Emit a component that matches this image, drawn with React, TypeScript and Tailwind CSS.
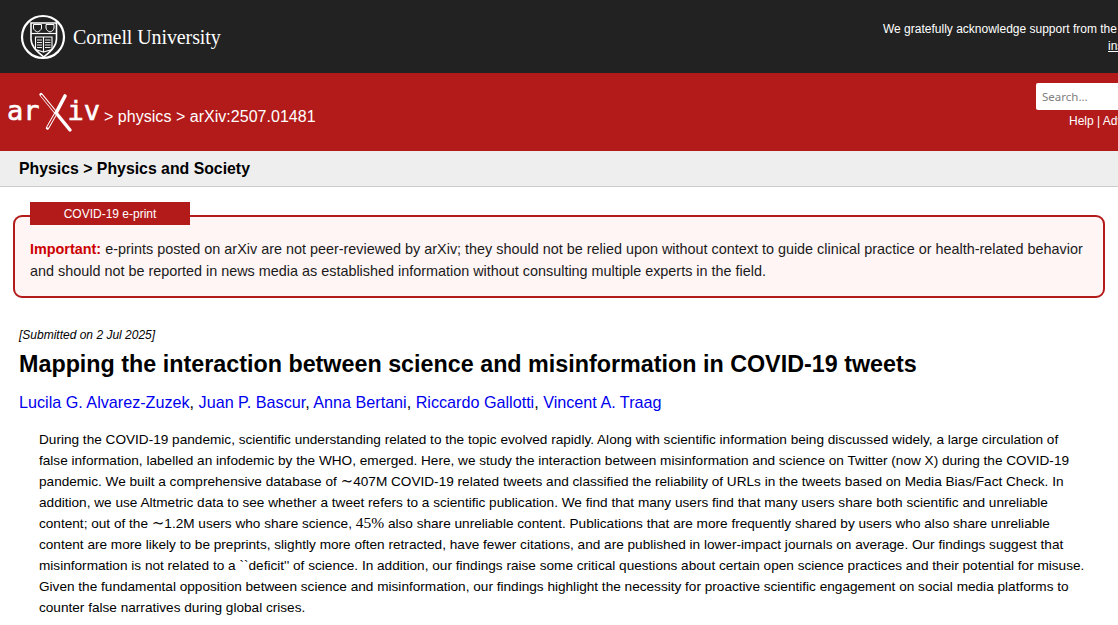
const serif = "font-['Liberation_Serif',serif]";
const tilde = "font-['DejaVu_Serif',serif] text-[15px] leading-[0]";

function CornellSeal() {
  return (
    <svg width="46" height="46" viewBox="0 0 46 46" className="shrink-0" fill="none" stroke="#fff">
      <circle cx="23" cy="23" r="21" strokeWidth="2.200" />
      <path d="M11 9h25.500v16c0 8-7 13-12.750 18C18 38 11 33 11 25z" strokeWidth="1.600" />
      <path d="M11 19.500h25.500" strokeWidth="1.200" />
      <path d="M13.500 10.500h8v3.500c0 2-2.500 3.500-4 4-1.500-.5-4-2-4-4zM26 10.500h8v3.500c0 2-2.500 3.500-4 4-1.500-.5-4-2-4-4z" strokeWidth="1" />
      <path d="M15.500 23h8v15l-8-2.500zM32 23h-8.500v15l8.500-2.500z" strokeWidth="1.100" />
      <path d="M17 26h5M17 28.500h5M17 31h5M17 33.500h5M25 26h5.500M25 28.500h5.500M25 31h5.500M25 33.500h5.500" strokeWidth=".9" />
    </svg>
  );
}

function ArxivLogo() {
  return (
    <svg width="92" height="40" viewBox="0 0 92 40" className="shrink-0 overflow-visible">
      <text x="-1" y="28" fill="#fff" stroke="#fff" strokeWidth=".6" fontFamily="DejaVu Sans Mono, monospace" fontSize="27">ar</text>
      <text x="59.500" y="28" fill="#fff" stroke="#fff" strokeWidth=".6" fontFamily="DejaVu Sans Mono, monospace" fontSize="27">iv</text>
      <path d="M33 2.500 62 38" stroke="#fff" strokeWidth="3.400" strokeLinecap="round" />
      <path d="M33.500 3.500 48 21" stroke="#b31b1b" strokeWidth="1.500" strokeLinecap="round" />
      <path d="M48 21 39.500 36" stroke="#fff" strokeWidth="3.400" strokeLinecap="round" />
      <path d="M47.500 22 40 35" stroke="#b31b1b" strokeWidth="1.500" strokeLinecap="round" />
      <path d="M57 4 48 21" stroke="#fff" strokeWidth="3.600" strokeLinecap="round" />
    </svg>
  );
}

export default function App() {
  return (
    <div className="h-screen w-full overflow-hidden bg-white font-['Liberation_Sans',Arial,sans-serif] text-black">
      <header className="flex h-[73px] items-center bg-[#222222] pl-[20px] text-white">
        <CornellSeal />
        <span className={`${serif} ml-[7px] w-[147px] shrink-0 whitespace-nowrap text-[20px] tracking-[-0.1px]`}>Cornell University</span>
        <div className="ml-[663px] shrink-0 self-start whitespace-nowrap pt-[21px] text-[12px] leading-[17px]">
          <div>We gratefully acknowledge support from the Simons Foundation and member</div>
          <div className="pl-[225px]"><a className="underline">institutions</a></div>
        </div>
      </header>

      <div className="flex h-[78px] bg-[#b31b1b] text-white">
        <div className="flex w-[1036px] shrink-0 items-start pl-[8px] pt-[19px]">
          <ArxivLogo />
          <div className="ml-[4px] mt-[15px] whitespace-nowrap text-[16px] leading-[20px] tracking-[0.03px]">
            &gt; physics &gt; arXiv:2507.01481
          </div>
        </div>
        <div className="w-[300px] shrink-0 pt-[10px]">
          <div className="flex h-[27px] items-center rounded-l-[2px] bg-white pl-[6px] font-['Noto_Sans',sans-serif] text-[11.500px] text-[#808080]">Search...</div>
          <div className="mt-[3px] whitespace-nowrap pl-[33px] text-[12px] leading-[16px]">Help | Advanced Search</div>
        </div>
      </div>

      <div className="flex h-[36px] items-center border-b border-[#cccccc] bg-[#eeeeee] pl-[19px] text-[15.840px] font-bold">
        Physics &gt; Physics and Society
      </div>

      <section className="relative mx-[13px] mt-[28px] h-[83px] rounded-[9px] border-2 border-[#b31b1b] bg-[#fff5f5] pl-[15px] pr-[10px] pt-[21px] text-[14.400px] leading-[22px] text-[#1a1a1a]">
        <div className="absolute -top-[15px] left-[15px] flex h-[23px] w-[160px] items-center justify-center bg-[#b31b1b] text-[12px] text-white">COVID-19 e-print</div>
        <p className="whitespace-nowrap">
          <strong className="text-[#cc0000]">Important:</strong> e-prints posted on arXiv are not peer-reviewed by arXiv; they should not be relied upon without context to guide clinical practice or health-related behavior
        </p>
        <p className="whitespace-nowrap">and should not be reported in news media as established information without consulting multiple experts in the field.</p>
      </section>

      <main className="pl-[19px]">
        <p className="mt-[29px] text-[12px] italic leading-[16px]">[Submitted on 2 Jul 2025]</p>
        <h1 className="mt-[6px] whitespace-nowrap text-[23.320px] font-bold leading-[30px]">Mapping the interaction between science and misinformation in COVID-19 tweets</h1>
        <p className="mt-[13px] text-[16.160px] leading-[20px]">
          <a className="text-[#0000ee]">Lucila G. Alvarez-Zuzek</a>, <a className="text-[#0000ee]">Juan P. Bascur</a>, <a className="text-[#0000ee]">Anna Bertani</a>, <a className="text-[#0000ee]">Riccardo Gallotti</a>, <a className="text-[#0000ee]">Vincent A. Traag</a>
        </p>
        <div className="ml-[20px] mt-[17px] text-[13.610px] leading-[21px] [&>div]:whitespace-nowrap">
          <div>During the COVID-19 pandemic, scientific understanding related to the topic evolved rapidly. Along with scientific information being discussed widely, a large circulation of</div>
          <div>false information, labelled an infodemic by the WHO, emerged. Here, we study the interaction between misinformation and science on Twitter (now X) during the COVID-19</div>
          <div>pandemic. We built a comprehensive database of <span className={tilde}>∼</span>407M COVID-19 related tweets and classified the reliability of URLs in the tweets based on Media Bias/Fact Check. In</div>
          <div>addition, we use Altmetric data to see whether a tweet refers to a scientific publication. We find that many users find that many users share both scientific and unreliable</div>
          <div>content; out of the <span className={tilde}>∼</span>1.2M users who share science, <span className={`${serif} text-[15.500px] leading-[0]`}>45%</span> also share unreliable content. Publications that are more frequently shared by users who also share unreliable</div>
          <div>content are more likely to be preprints, slightly more often retracted, have fewer citations, and are published in lower-impact journals on average. Our findings suggest that</div>
          <div>misinformation is not related to a ``deficit'' of science. In addition, our findings raise some critical questions about certain open science practices and their potential for misuse.</div>
          <div>Given the fundamental opposition between science and misinformation, our findings highlight the necessity for proactive scientific engagement on social media platforms to</div>
          <div>counter false narratives during global crises.</div>
        </div>
      </main>
    </div>
  );
}
